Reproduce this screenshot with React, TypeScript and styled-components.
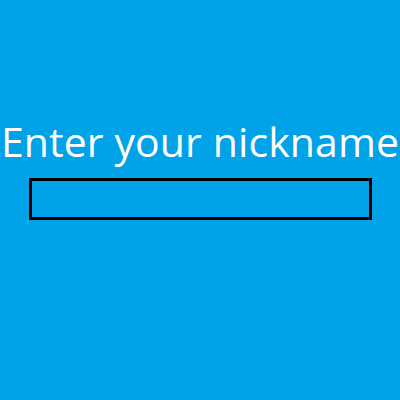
import React from "react";
import styled, { createGlobalStyle } from "styled-components";

const Global = createGlobalStyle`
  html, body { margin: 0; padding: 0; }
  body { background: #00a2e8; font-family: "Open Sans", "Noto Sans", sans-serif; }
`;

const Page = styled.div`
  width: 400px;
  height: 400px;
  display: flex;
  flex-direction: column;
  align-items: center;
  justify-content: flex-start;
  padding-top: 113px;
  box-sizing: border-box;
`;

const Title = styled.h1`
  margin: 0;
  font-weight: 400;
  font-size: 41px;
  line-height: 56px;
  letter-spacing: 0.1px;
  color: #ffffff;
  white-space: nowrap;
`;

const Input = styled.input`
  margin-top: 9px;
  width: 343px;
  height: 42px;
  box-sizing: border-box;
  border: 3px solid #000000;
  background: transparent;
  outline: none;
  margin-left: 1px;
`;

export default function App() {
  return (
    <>
      <Global />
      <Page>
        <Title>Enter your nickname</Title>
        <Input type="text" />
      </Page>
    </>
  );
}
